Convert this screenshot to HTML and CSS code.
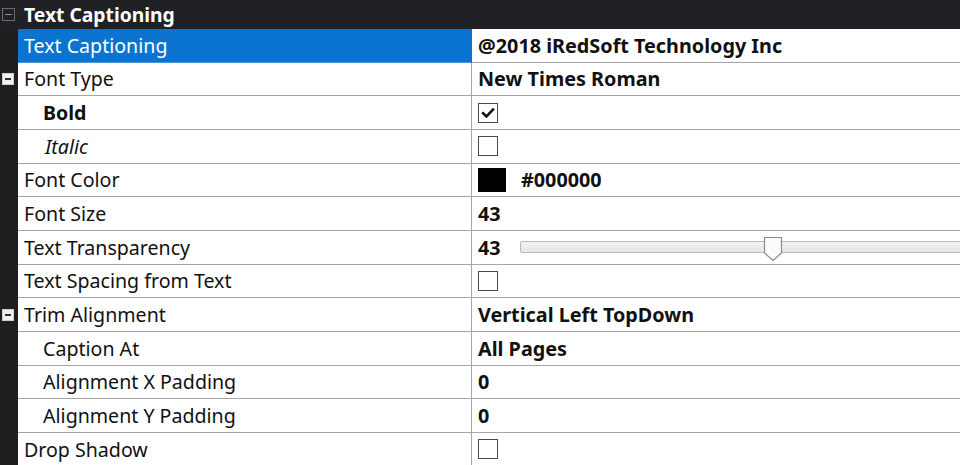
FILE: index.html
```html
<!DOCTYPE html>
<html lang="en">
<head>
<meta charset="utf-8">
<title>Text Captioning</title>
<link rel="stylesheet" href="styles.css">
</head>
<body>
<div class="panel">
  <div class="category">
    <span class="cat-toggle"><span class="cat-minus"></span></span>
    <span class="cat-title">Text Captioning</span>
  </div>
  <div class="grid">
    <div class="gutter"></div>
    <div class="name selected">Text Captioning</div>
    <div class="value bold">@2018 iRedSoft Technology Inc</div>

    <div class="gutter"><span class="expander"></span></div>
    <div class="name">Font Type</div>
    <div class="value bold">New Times Roman</div>

    <div class="gutter"></div>
    <div class="name sub bold">Bold</div>
    <div class="value"><span class="check checked"><svg viewBox="0 0 20 20" width="20" height="20"><path d="M4.5 10.2 L8.3 13.8 L15.6 6.2" fill="none" stroke="#111" stroke-width="2.8" stroke-linecap="square"/></svg></span></div>

    <div class="gutter"></div>
    <div class="name sub italic">Italic</div>
    <div class="value"><span class="check"></span></div>

    <div class="gutter"></div>
    <div class="name">Font Color</div>
    <div class="value bold"><span class="swatch"></span><span class="hex">#000000</span></div>

    <div class="gutter"></div>
    <div class="name">Font Size</div>
    <div class="value bold">43</div>

    <div class="gutter"></div>
    <div class="name">Text Transparency</div>
    <div class="value bold slider-cell">
      <span class="slider-num">43</span>
      <span class="track">
        <span class="thumb"><svg viewBox="0 0 20 26" width="20" height="26"><path d="M1.5 1.5 H18.5 V17 L10 24.5 L1.5 17 Z" fill="#fbfbfb" stroke="#8a8a8a" stroke-width="1.2"/></svg></span>
      </span>
    </div>

    <div class="gutter"></div>
    <div class="name">Text Spacing from Text</div>
    <div class="value"><span class="check"></span></div>

    <div class="gutter"><span class="expander"></span></div>
    <div class="name">Trim Alignment</div>
    <div class="value bold">Vertical Left TopDown</div>

    <div class="gutter"></div>
    <div class="name sub">Caption At</div>
    <div class="value bold">All Pages</div>

    <div class="gutter"></div>
    <div class="name sub">Alignment X Padding</div>
    <div class="value bold">0</div>

    <div class="gutter"></div>
    <div class="name sub">Alignment Y Padding</div>
    <div class="value bold">0</div>

    <div class="gutter"></div>
    <div class="name">Drop Shadow</div>
    <div class="value"><span class="check"></span></div>
  </div>
</div>
</body>
</html>
```
FILE: styles.css
```css
html, body {
  margin: 0;
  padding: 0;
  background: #1f1f21;
  overflow: hidden;
}

.panel {
  width: 960px;
  height: 465px;
  font-family: "Noto Sans", "Open Sans", sans-serif;
  font-size: 19.6px;
  color: #111;
  background: #1f1f21;
}

/* category header */
.category {
  height: 29px;
  display: flex;
  align-items: center;
  background: #202124;
  color: #fff;
}

.cat-toggle {
  width: 11px;
  height: 11px;
  margin-left: 2px;
  margin-right: 9px;
  border: 1px solid #6c6c6c;
  display: flex;
  align-items: center;
  justify-content: center;
}

.cat-minus {
  width: 7px;
  height: 1px;
  background: #8a8a8a;
}

.cat-title {
  font-weight: 700;
  font-size: 19.3px;
}

/* property rows */
.grid {
  display: grid;
  grid-template-columns: 18px 454px 1fr;
  grid-auto-rows: 33.67px;
}

.gutter {
  background: #1f1f21;
  display: flex;
  align-items: center;
  justify-content: center;
}

.expander {
  width: 10px;
  height: 10px;
  background: #f0f0f0;
  border: 1px solid #cfcfcf;
  position: relative;
  margin-left: -2px;
}

.expander::after {
  content: "";
  position: absolute;
  left: 2px;
  top: 4px;
  width: 6px;
  height: 2px;
  background: #333;
}

.name, .value {
  background: #fff;
  border-bottom: 1px solid #a6a6a6;
  display: flex;
  align-items: center;
  box-sizing: border-box;
  white-space: nowrap;
  overflow: hidden;
}

.name {
  padding-left: 6px;
  border-right: 1px solid #a6a6a6;
}

.name.sub {
  padding-left: 25px;
}

.name.italic {
  padding-left: 27px;
}

.name.selected {
  background: #0a74d0;
  color: #fff;
  border-bottom: 1px solid #4d97d8;
  border-right: 1px solid #0a74d0;
}

.value {
  padding-left: 6px;
  font-size: 19.8px;
}

.bold { font-weight: 700; }
.italic { font-style: italic; }

.check {
  width: 18px;
  height: 18px;
  border: 1.5px solid #4a4a4a;
  background: #fff;
  display: flex;
  align-items: center;
  justify-content: center;
}

.check svg {
  display: block;
}

.swatch {
  width: 28px;
  height: 24px;
  background: #000;
}

.hex {
  margin-left: 15px;
}

.slider-cell {
  gap: 19px;
}

.track {
  position: relative;
  flex: 1;
  height: 10px;
  margin-right: -4px;
  border: 1px solid #b9b9b9;
  border-radius: 2px;
  background: linear-gradient(#f4f4f4, #e6e6e6);
}

.thumb {
  position: absolute;
  left: 242px;
  top: -6px;
  width: 20px;
  height: 26px;
}

.thumb svg {
  display: block;
}
```
